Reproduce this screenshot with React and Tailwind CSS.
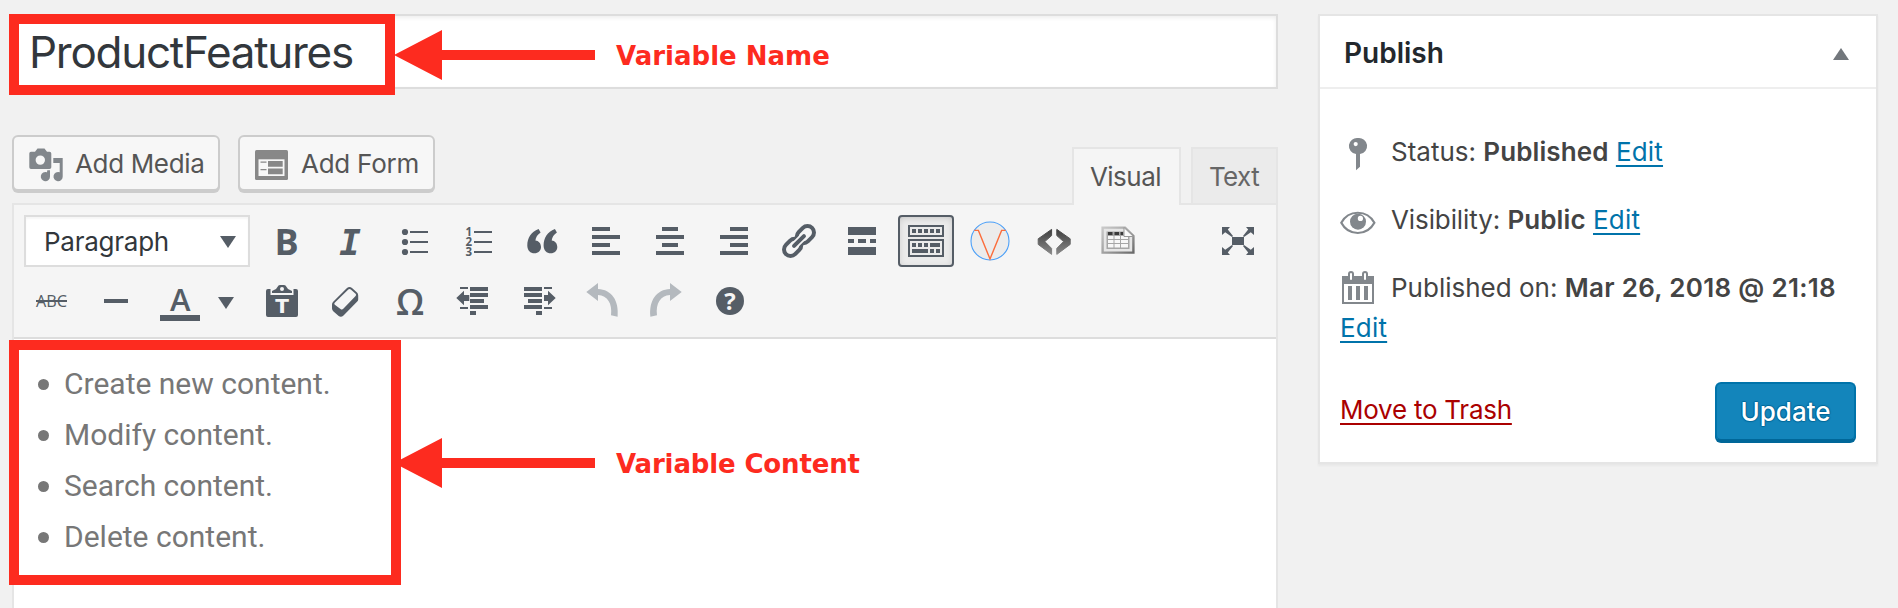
import React from 'react';

const Icon = ({ children, className = 'fill-[#555d66]' }) => (
  <svg viewBox="0 0 40 40" className={`h-10 w-10 shrink-0 overflow-visible ${className}`}>{children}</svg>
);

const Cell = ({ children }) => (
  <div className="flex h-[60px] w-16 shrink-0 items-center justify-center">{children}</div>
);

const Bars = ({ rows }) => (
  <Icon>
    {rows.map(([x, y, w, h], i) => (
      <rect key={i} x={x} y={y} width={w} height={h} />
    ))}
  </Icon>
);

const Down = () => (
  <svg viewBox="0 0 16 12" className="h-3 w-4 shrink-0 fill-[#555d66]">
    <path d="M0 0H16L8 12Z" />
  </svg>
);

const Bold = () => (
  <Icon>
    <text x="20.5" y="34" textAnchor="middle" fontSize="36" fontWeight="700" className="font-['Open_Sans',sans-serif]">B</text>
  </Icon>
);

const Italic = () => (
  <Icon>
    <text x="20" y="34" textAnchor="middle" fontSize="36" fontWeight="700" fontStyle="italic" className="font-['DejaVu_Sans_Mono',monospace]">I</text>
  </Icon>
);

const Bullets = () => (
  <Icon>
    {[11, 21, 31].map((y) => (
      <g key={y}>
        <circle cx="11" cy={y} r="3.1" />
        <rect x="16" y={y - 1} width="18" height="2" />
      </g>
    ))}
  </Icon>
);

const Numbers = () => (
  <Icon>
    {[11, 21, 31].map((y, i) => (
      <g key={y}>
        <text x="10.8" y={y + 4} textAnchor="middle" fontSize="11.5" fontWeight="700" className="font-['Open_Sans',sans-serif]">{i + 1}</text>
        <rect x="16" y={y - 1} width="18" height="2" />
      </g>
    ))}
  </Icon>
);

const QUOTE = 'M16.6 8C9 11 5.3 17 5.3 24.5C5.3 29.5 8.5 32.3 12.4 32.3C16.3 32.3 19 29.5 19 26C19 22.2 16.5 19.7 13.4 19.5C13.8 16 15.5 13.5 18.6 11.4Z';

const Quote = () => (
  <Icon>
    <path d={QUOTE} />
    <path d={QUOTE} transform="translate(16.3 0)" />
  </Icon>
);

const LinkIcon = () => (
  <Icon className="fill-none stroke-[#555d66]">
    <g transform="rotate(-45 21 20)">
      <rect x="2.5" y="13.5" width="19" height="13" rx="6.5" strokeWidth="4" />
      <rect x="20.5" y="13.5" width="19" height="13" rx="6.5" strokeWidth="4" />
      <path d="M14.5 20H27.5" className="stroke-[#f5f5f5]" strokeWidth="7.5" strokeLinecap="round" />
      <path d="M14 20H28" strokeWidth="4" strokeLinecap="round" />
    </g>
  </Icon>
);

const Kitchen = () => (
  <Icon>
    <path fillRule="evenodd" d="M2 4H38V16H2ZM4 6V14H36V6ZM2 18H38V36H2ZM4 20V34H36V20Z" />
    <path d="M6 8h4v4h-4zM12 8h4v4h-4zM18 8h4v4h-4zM24 8h4v4h-4zM30 8h4v4h-4zM6 22h4v4h-4zM12 22h4v4h-4zM18 22h4v4h-4zM24 22h10v4h-10zM6 28h16v4h-16zM24 28h4v4h-4zM30 28h4v4h-4z" />
  </Icon>
);

const VLogo = () => (
  <Icon className="fill-none">
    <circle cx="20" cy="20" r="19" className="fill-[#ececec] stroke-[#4a9ff8]" strokeWidth="1.1" />
    <path d="M4.3 9.4H8.4L20 38L31.6 9.4H35.7" className="stroke-[#fb6d3c]" strokeWidth="1.4" />
  </Icon>
);

const Code = () => (
  <Icon className="">
    <defs>
      <linearGradient id="code" x1="0" y1="0" x2="0" y2="1">
        <stop offset="0" stopColor="#3f3f3f" />
        <stop offset="1" stopColor="#8a8a8a" />
      </linearGradient>
    </defs>
    <g fill="url(#code)" stroke="url(#code)" strokeWidth="1" strokeLinejoin="round">
      <path d="M17.6 8.4L4.2 17.8V23.4L17.6 33.4V27.4L10.8 20.6L17.6 14.6Z" />
      <path d="M22.8 8.4L36.2 17.8V23.4L22.8 33.4V27.4L29.6 20.6L22.8 14.6Z" />
    </g>
  </Icon>
);

const TableIcon = () => (
  <Icon className="">
    <defs>
      <linearGradient id="sheet" x1="0" y1="0" x2="1" y2="1">
        <stop offset="0" stopColor="#c9c9c9" />
        <stop offset="0.5" stopColor="#a3a3a3" />
        <stop offset="1" stopColor="#6a6a6a" />
      </linearGradient>
    </defs>
    <path d="M4.6 6.6H27L35.4 15V31.6H4.6Z" fill="#e6e6e6" stroke="url(#sheet)" strokeWidth="2.4" />
    <rect x="8.5" y="10.5" width="23" height="17.5" fill="#a6a6a6" />
    <path d="M10 15h5.5v3h-5.5zM16.5 15h5.5v3h-5.5zM23 15h7v3h-7zM10 19h5.5v3h-5.5zM16.5 19h5.5v3h-5.5zM23 19h7v3h-7zM10 23h5.5v3.5h-5.5zM16.5 23h5.5v3.5h-5.5zM23 23h7v3.5h-7z" fill="#f7f7f7" />
    <path d="M10 11h4.5v3h-4.5zM16.5 11h4.5v3h-4.5zM22.5 11h2.5v3h-2.5z" fill="#3a3a3a" />
    <path d="M26 6.5L35.4 15.5H26Z" fill="#fafafa" stroke="#999" strokeWidth="1" />
  </Icon>
);

const Fullscreen = () => (
  <Icon>
    <rect x="14" y="16" width="12" height="8" />
    <path d="M4 6H12L9.8 8.6L15 15L14 16L7.2 11.2L4 14Z" />
    <path d="M36 6H28L30.2 8.6L25 15L26 16L32.8 11.2L36 14Z" />
    <path d="M4 34H12L9.8 31.4L15 25L14 24L7.2 28.8L4 26Z" />
    <path d="M36 34H28L30.2 31.4L25 25L26 24L32.8 28.8L36 26Z" />
  </Icon>
);

const Strike = () => (
  <Icon>
    <text x="19.5" y="26" textAnchor="middle" fontSize="17" fontWeight="500" textLength="31" lengthAdjust="spacingAndGlyphs" className="font-['Open_Sans',sans-serif]">ABC</text>
    <rect x="4" y="19" width="31" height="2" />
  </Icon>
);

const TextColor = () => (
  <Icon>
    <text x="20.2" y="30" textAnchor="middle" fontSize="31" fontWeight="600" className="font-['Open_Sans',sans-serif]">A</text>
    <rect x="0" y="34" width="40" height="6" />
  </Icon>
);

const Paste = () => (
  <Icon>
    <path d="M6 8H8.5V14H31.5V8H34A2 2 0 0 1 36 10V34A2 2 0 0 1 34 36H6A2 2 0 0 1 4 34V10A2 2 0 0 1 6 8Z" />
    <path fillRule="evenodd" d="M10 12V10L14 8L16.5 4.5Q17 4 18 4H22Q23 4 23.5 4.5L26 8L30 10V12ZM20 6A2 2 0 1 0 20 10A2 2 0 1 0 20 6Z" />
    <text x="20" y="32.3" textAnchor="middle" fontSize="20" fontWeight="700" className="fill-[#f5f5f5] font-['DejaVu_Sans',sans-serif]">T</text>
  </Icon>
);

const Eraser = () => (
  <Icon>
    <path d="M21 7Q23.5 4.8 26 7L31 11.5Q32.2 12.7 32.2 14.5V18.5Q32.2 19.7 31 20.8L17.5 34.5Q15 36.8 12.7 35L7.5 30.5Q6 29.2 6 27.5V23.5Q6 22 7.2 20.8Z" />
    <path d="M22.3 8.6Q23.5 7.5 24.8 8.6L29.6 12.8Q30.7 13.9 29.6 15L17.3 27.8Q16 29 14.5 27.9L8.8 23.7Q7.7 22.8 8.7 21.8Z" className="fill-[#f5f5f5]" />
  </Icon>
);

const Omega = () => (
  <Icon>
    <text x="20" y="34" textAnchor="middle" fontSize="36" fontWeight="600" className="font-['Open_Sans',sans-serif]">Ω</text>
  </Icon>
);

const Outdent = () => (
  <Icon>
    <path d="M2.3 17L10 9.7V14H15.3V20H10V24.3ZM6 6h8v2h-8zM6 26h8v2h-8zM16 6h18v4h-18zM16 12h18v4h-18zM16 18h14v4h-14zM16 24h18v4h-18zM16 30h6v4h-6z" />
  </Icon>
);

const Indent = () => (
  <Icon>
    <path d="M37.7 17L30 9.7V14H26V20H30V24.3ZM26 6h8v2h-8zM26 26h8v2h-8zM6 6h18v4h-18zM6 12h18v4h-18zM10 18h14v4h-14zM6 24h18v4h-18zM18 30h6v4h-6z" />
  </Icon>
);

const Undo = ({ flip }) => (
  <Icon className="fill-[#b4b9be]">
    <g transform={flip ? 'translate(40 0) scale(-1 1)' : undefined}>
      <path d="M4.3 10.9L16 2V8C29.5 8.5 37.3 19.5 35.6 35.7L29 34.2C30.5 22.5 25.5 14.6 16 14V20Z" />
    </g>
  </Icon>
);

const Help = () => (
  <Icon>
    <circle cx="20" cy="20" r="14" />
    <text x="20" y="28.5" textAnchor="middle" fontSize="24" fontWeight="700" className="fill-[#f5f5f5] font-['Open_Sans',sans-serif]">?</text>
  </Icon>
);

const MediaIcon = () => (
  <Icon className="fill-[#82878c]">
    <path fillRule="evenodd" d="M5 6.7H9L11.5 3.5H18.5L21 6.7H23.5Q25.3 6.7 25.3 8.5V22.2Q25.3 24 23.5 24H5Q3.3 24 3.3 22.2V8.5Q3.3 6.7 5 6.7ZM14.3 10.4A4.7 4.7 0 1 0 14.3 19.8A4.7 4.7 0 1 0 14.3 10.4Z" />
    <path d="M27.3 13H36.7V31.5A4.6 4.6 0 1 1 33.7 27.3V18H27.3Z" />
    <path d="M24 25.3V31.5A4.6 4.6 0 1 1 21 27.3L21.3 25.3Z" />
  </Icon>
);

const FormIcon = () => (
  <svg viewBox="0 0 33 30" className="h-[30px] w-[33px] shrink-0 fill-[#888]">
    <rect x="0" y="0" width="33" height="30" rx="1.5" />
    <path d="M3.5 9.3H29.5V26H3.5Z" className="fill-[#f7f7f7]" />
    <path d="M5.5 11.5h6v1.2h-6zM5.5 19h6v1.2h-6zM13 11h14.7v5.7h-14.7zM13 18.5h14.7v5.7h-14.7z" />
  </svg>
);

const Pin = () => (
  <Icon className="fill-[#82878c]">
    <path fillRule="evenodd" d="M20 6A8 8 0 0 1 22 22.1V34.7L18 38.2V22.1A8 8 0 0 1 20 6ZM17.7 10A2.1 2.1 0 1 0 17.7 14.2A2.1 2.1 0 1 0 17.7 10Z" />
  </Icon>
);

const Eye = () => (
  <Icon className="fill-none">
    <path d="M3.3 22.8C10.5 9.4 29 9.4 36.4 22.8C29 36.4 10.5 36.4 3.3 22.8Z" className="stroke-[#82878c]" strokeWidth="2.2" />
    <circle cx="20" cy="21.7" r="8" className="fill-[#82878c]" />
    <circle cx="22.4" cy="18.4" r="2.6" className="fill-white" />
  </Icon>
);

const Calendar = () => (
  <Icon className="fill-[#82878c]">
    <path fillRule="evenodd" d="M4 8H36V36H4ZM6 16V34H34V16Z" />
    <path d="M10 18h4v14h-4zM18 18h4v14h-4zM26 18h4v14h-4z" />
    {[13, 27].map((x) => (
      <g key={x}>
        <rect x={x - 3} y="3" width="6" height="10" rx="3" />
        <rect x={x - 1} y="5" width="2" height="7" rx="1" className="fill-white" />
      </g>
    ))}
  </Icon>
);

const Arrow = ({ className }) => (
  <svg viewBox="0 0 201 50" className={`absolute left-[394px] h-[50px] w-[201px] fill-[#fd2b1f] ${className}`}>
    <path d="M0 25L48 0V20H201V30H48V50Z" />
  </svg>
);

const EditLink = () => (
  <a className="tracking-[0.2px] text-[#0073aa] underline decoration-2 underline-offset-[4px] [text-decoration-skip-ink:none]">Edit</a>
);

const StatusRow = ({ icon, label, value, labelClass = '', valueClass = 'tracking-[0.1px]', children }) => (
  <div className="flex h-10 items-center gap-[13px] pl-[18px] leading-10 whitespace-pre">
    {icon}
    <p>
      <span className={labelClass}>{label}</span> <b className={`font-semibold ${valueClass}`}>{value}</b> {children}
    </p>
  </div>
);

const ITEMS = ['Create new content.', 'Modify content.', 'Search content.', 'Delete content.'];

export default function App() {
  return (
    <div className="relative flex h-[608px] w-[1898px] items-start gap-10 overflow-hidden bg-[#f1f1f1] pt-3.5 pl-3 font-['Inter',sans-serif] text-[26px]">
      <main className="flex w-[1266px] shrink-0 flex-col">
        <div className="flex h-[75px] items-center border-2 border-[#ddd] bg-white pt-px pl-[15px] text-[44px] leading-none tracking-[-1.27px] text-[#32373c] shadow-[inset_0_2px_4px_rgba(0,0,0,0.07)]">
          ProductFeatures
        </div>

        <div className="mt-11 flex h-[70px] items-end justify-between">
          <div className="flex gap-[18px] self-start pt-0.5 text-[#555]">
            <button className="flex h-14 w-52 items-center gap-[9px] rounded-md border-2 border-[#ccc] bg-[#f7f7f7] pt-1 pl-3 tracking-[-0.35px] shadow-[0_2px_0_#ccc]">
              <MediaIcon />
              <span className="-mt-1">Add Media</span>
            </button>
            <button className="flex h-14 w-[197px] items-center gap-[13px] rounded-md border-2 border-[#ccc] bg-[#f7f7f7] pl-[15px] tracking-[-0.25px] shadow-[0_2px_0_#ccc]">
              <span className="mt-1"><FormIcon /></span>
              <span>Add Form</span>
            </button>
          </div>
          <div className="flex items-start gap-2.5">
            <div className="relative z-10 -mb-0.5 flex h-[58px] w-[109px] items-center justify-center border-2 border-b-0 border-[#e5e5e5] bg-[#f5f5f5] pr-0.5 pb-0.5 tracking-[-0.5px] text-[#555]">Visual</div>
            <div className="flex h-14 w-[87px] items-center justify-center border-2 border-b-0 border-[#e5e5e5] bg-[#ebebeb] pr-px tracking-[-0.6px] text-[#666]">Text</div>
          </div>
        </div>

        <section className="flex h-[420px] flex-col border-2 border-[#e5e5e5] bg-white">
          <div className="h-[134px] shrink-0 border-b-2 border-[#ddd] bg-[#f5f5f5] pt-1.5">
            <div className="flex items-center">
              <div className="mr-1 ml-2.5 flex h-[52px] w-[226px] shrink-0 items-center justify-between border-2 border-[#ddd] bg-white pr-3 pl-[18px] tracking-[-0.25px] text-[#32373c] shadow-[inset_0_2px_2px_rgba(0,0,0,0.04)]">
                Paragraph
                <span className="pt-0.5"><Down /></span>
              </div>
              <Cell><Bold /></Cell>
              <Cell><Italic /></Cell>
              <Cell><Bullets /></Cell>
              <Cell><Numbers /></Cell>
              <Cell><Quote /></Cell>
              <Cell><Bars rows={[[6, 6, 18, 4], [6, 14, 28, 4], [6, 22, 18, 4], [6, 30, 28, 4]]} /></Cell>
              <Cell><Bars rows={[[12, 6, 16, 4], [6, 14, 28, 4], [12, 22, 16, 4], [6, 30, 28, 4]]} /></Cell>
              <Cell><Bars rows={[[16, 6, 18, 4], [6, 14, 28, 4], [16, 22, 18, 4], [6, 30, 28, 4]]} /></Cell>
              <Cell><LinkIcon /></Cell>
              <Cell><Bars rows={[[6, 6, 28, 8], [6, 18, 6, 4], [16, 18, 8, 4], [28, 18, 6, 4], [6, 26, 28, 8]]} /></Cell>
              <Cell>
                <div className="flex h-[52px] w-14 items-center justify-center rounded border-2 border-[#555d66] bg-[#ebebeb] shadow-[inset_0_2px_10px_-4px_rgba(0,0,0,0.3)]">
                  <Kitchen />
                </div>
              </Cell>
              <Cell><VLogo /></Cell>
              <Cell><Code /></Cell>
              <Cell><TableIcon /></Cell>
              <div className="ml-auto pr-1.5"><Cell><Fullscreen /></Cell></div>
            </div>
            <div className="flex items-center pl-1.5">
              <Cell><Strike /></Cell>
              <Cell><Bars rows={[[8, 18, 24, 4]]} /></Cell>
              <Cell><TextColor /></Cell>
              <div className="w-[38px] pt-1 pl-1.5"><Down /></div>
              <Cell><Paste /></Cell>
              <Cell><Eraser /></Cell>
              <Cell><Omega /></Cell>
              <Cell><Outdent /></Cell>
              <Cell><Indent /></Cell>
              <Cell><Undo /></Cell>
              <Cell><Undo flip /></Cell>
              <Cell><Help /></Cell>
            </div>
          </div>
          <ul className="pt-[19px] pl-6 font-['Roboto',sans-serif] text-[30px] leading-[51px] text-[#777]">
            {ITEMS.map((t) => (
              <li key={t} className="flex items-center gap-[15px]">
                <span className="mt-px h-[11px] w-[11px] rounded-full bg-[#777]" />
                {t}
              </li>
            ))}
          </ul>
        </section>
      </main>

      <aside className="flex h-[450px] w-[560px] shrink-0 flex-col border-2 border-[#e5e5e5] bg-white text-[#444] shadow-[0_2px_2px_rgba(0,0,0,0.04)]">
        <header className="flex h-[73px] shrink-0 items-center justify-between border-b-2 border-[#eee] pr-[27px] pl-6">
          <h2 className="pt-0.5 text-[28px] font-semibold text-[#23282d]">Publish</h2>
          <svg viewBox="0 0 16 12" className="mt-1 h-3 w-4 fill-[#72777c]"><path d="M8 0L16 12H0Z" /></svg>
        </header>
        <div className="flex flex-col gap-7 pt-[43px]">
          <StatusRow icon={<Pin />} label="Status:" value="Published"><EditLink /></StatusRow>
          <StatusRow icon={<Eye />} label="Visibility:" value="Public" labelClass="tracking-[-0.1px]"><EditLink /></StatusRow>
          <div>
            <StatusRow icon={<Calendar />} label="Published on:" value="Mar 26, 2018 @ 21:18" valueClass="tracking-[0.3px]" />
            <p className="pl-5 leading-10"><EditLink /></p>
          </div>
        </div>
        <footer className="mt-auto flex h-[101px] items-start justify-between px-5 pt-[21px]">
          <a className="leading-[56px] tracking-[-0.25px] text-[#a00] underline decoration-2 underline-offset-[4px] [text-decoration-skip-ink:none]">Move to Trash</a>
          <button className="h-[59px] w-[141px] rounded-md border-2 border-[#0073aa] border-b-[#006799] bg-[#1385bb] font-medium text-white shadow-[0_2px_0_#006799] [text-shadow:0_-1px_1px_#006799,1px_0_1px_#006799,0_1px_1px_#006799,-1px_0_1px_#006799]">Update</button>
        </footer>
      </aside>

      <Arrow className="top-[30px]" />
      <Arrow className="top-[438px]" />
      <div className="absolute top-3.5 left-[9px] h-[81px] w-[386px] border-10 border-[#fd2b1f]" />
      <div className="absolute top-[340px] left-[9px] h-[245px] w-[392px] border-10 border-[#fd2b1f]" />
      <p className="absolute top-10 left-[616px] font-['DejaVu_Sans',sans-serif] leading-8 font-bold text-[#fd2b1f]">Variable Name</p>
      <p className="absolute top-[448px] left-[616px] font-['DejaVu_Sans',sans-serif] leading-8 font-bold tracking-[-0.15px] text-[#fd2b1f]">Variable Content</p>
    </div>
  );
}
